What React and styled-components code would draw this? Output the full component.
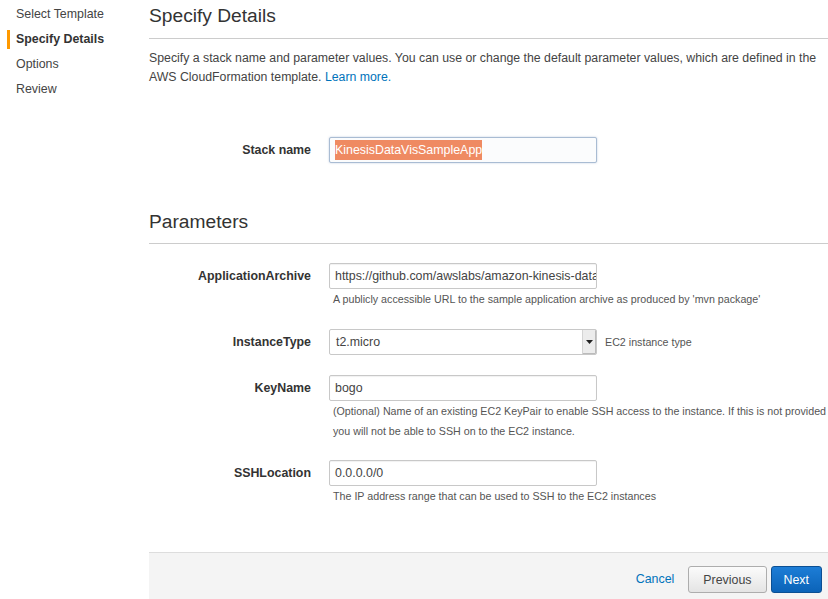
import styled, { createGlobalStyle } from "styled-components";

const GlobalStyle = createGlobalStyle`
  html, body {
    margin: 0;
    padding: 0;
    background: #fff;
  }
  body {
    font-family: "Liberation Sans", Arial, sans-serif;
    color: #444;
    overflow: hidden;
  }
`;

const steps = ["Select Template", "Specify Details", "Options", "Review"];

const params = [
  {
    name: "ApplicationArchive",
    value: "https://github.com/awslabs/amazon-kinesis-data-vis-sample-app/releases/download/v1.1.2/amazon-kinesis-data-visualization-sample-1.1.2-assembly.zip",
    help: "A publicly accessible URL to the sample application archive as produced by 'mvn package'",
    gap: "19px",
  },
  {
    name: "InstanceType",
    value: "t2.micro",
    select: true,
    side: "EC2 instance type",
  },
  {
    name: "KeyName",
    value: "bogo",
    help: "(Optional) Name of an existing EC2 KeyPair to enable SSH access to the instance. If this is not provided you will not be able to SSH on to the EC2 instance.",
  },
  {
    name: "SSHLocation",
    value: "0.0.0.0/0",
    help: "The IP address range that can be used to SSH to the EC2 instances",
    gap: "19px",
  },
];

const App = () => {
  return (
    <Page>
      <GlobalStyle />
      <Sidebar>
        {steps.map((s, i) => (
          <Step key={s} $active={i === 1}>
            {s}
          </Step>
        ))}
      </Sidebar>
      <Content>
        <Heading>Specify Details</Heading>
        <Intro>
          Specify a stack name and parameter values. You can use or change the
          default parameter values, which are defined in the AWS CloudFormation
          template. <Link>Learn more.</Link>
        </Intro>

        <Row $top="50px">
          <Label>Stack name</Label>
          <Field>
            <FakeInput $focused>
              <Selected>KinesisDataVisSampleApp</Selected>
            </FakeInput>
          </Field>
        </Row>

        <Heading $top="43px" $bottom="9px">Parameters</Heading>

        {params.map((p) => (
          <Row key={p.name} $top={p.gap || "20px"}>
            <Label>{p.name}</Label>
            <Field>
              <InputLine>
                {p.select ? (
                  <SelectBox>
                    <SelectValue>{p.value}</SelectValue>
                    <Caret>
                      <svg width="7" height="4" viewBox="0 0 7 4">
                        <path d="M0 0h7L3.5 4z" fill="#222" />
                      </svg>
                    </Caret>
                  </SelectBox>
                ) : (
                  <FakeInput>{p.value}</FakeInput>
                )}
                {p.side && <SideHelp>{p.side}</SideHelp>}
              </InputLine>
              {p.help && <Help>{p.help}</Help>}
            </Field>
          </Row>
        ))}

        <Footer>
          <CancelLink>Cancel</CancelLink>
          <Button>Previous</Button>
          <Button $primary>Next</Button>
        </Footer>
      </Content>
    </Page>
  );
};

const Page = styled.div`
  display: flex;
  width: 828px;
  height: 599px;
`;

const Sidebar = styled.nav`
  width: 149px;
  flex-shrink: 0;
  padding-top: 5px;
  display: flex;
  flex-direction: column;
  gap: 6px;
`;

const Step = styled.div`
  height: 19px;
  line-height: 19px;
  font-size: 12.4px;
  margin-left: 7px;
  padding-left: 6px;
  border-left: 3px solid ${(p) => (p.$active ? "#f90" : "transparent")};
  font-weight: ${(p) => (p.$active ? "bold" : "normal")};
  color: ${(p) => (p.$active ? "#333" : "#444")};
`;

const Content = styled.main`
  flex: 1;
  display: flex;
  flex-direction: column;
  min-width: 0;
`;

const Heading = styled.h2`
  margin: ${(p) => p.$top || "0"} 0 0;
  padding: 4px 0 ${(p) => p.$bottom || "10px"};
  font-size: 19.2px;
  line-height: 24px;
  font-weight: normal;
  color: #333;
  border-bottom: 1px solid #ccc;
`;

const Intro = styled.p`
  margin: 10px 0 0;
  font-size: 12.3px;
  line-height: 19px;
  color: #444;
  padding-right: 10px;
`;

const Link = styled.a`
  color: #0073bb;
  cursor: pointer;
`;

const Row = styled.div`
  display: flex;
  align-items: flex-start;
  margin-top: ${(p) => p.$top};
`;

const Label = styled.div`
  width: 162px;
  flex-shrink: 0;
  text-align: right;
  font-size: 12.4px;
  font-weight: bold;
  color: #333;
  line-height: 26px;
  padding-right: 18px;
`;

const Field = styled.div`
  flex: 1;
  min-width: 0;
`;

const InputLine = styled.div`
  display: flex;
  align-items: center;
`;

const FakeInput = styled.div`
  width: 268px;
  height: 26px;
  box-sizing: border-box;
  padding: 0 5px;
  border: 1px solid ${(p) => (p.$focused ? "#a9bcd3" : "#c8c8c8")};
  border-radius: 2px;
  background: ${(p) => (p.$focused ? "#fbfcfd" : "#fff")};
  box-shadow: ${(p) =>
    p.$focused ? "0 0 2px rgba(120,150,190,0.5)" : "inset 0 1px 1px rgba(0,0,0,0.06)"};
  font-size: 12.4px;
  line-height: 24px;
  color: #444;
  white-space: nowrap;
  overflow: hidden;
`;

const Selected = styled.span`
  background: #ef8a62;
  color: #fff;
  padding: 3px 0;
`;

const SelectBox = styled.div`
  width: 268px;
  height: 26px;
  box-sizing: border-box;
  display: flex;
  border: 1px solid #c8c8c8;
  border-radius: 2px;
  background: #fff;
  overflow: hidden;
`;

const SelectValue = styled.div`
  flex: 1;
  padding: 0 6px;
  font-size: 12.4px;
  line-height: 24px;
  color: #444;
`;

const Caret = styled.div`
  width: 13px;
  display: flex;
  align-items: center;
  justify-content: center;
  background: #ececec;
  border-left: 1px solid #d4d4d4;
  box-shadow: inset -1px -1px 0 #bbb;
`;

const SideHelp = styled.span`
  margin-left: 8px;
  font-size: 10.7px;
  color: #555;
`;

const Help = styled.div`
  padding-left: 4px;
  font-size: 10.7px;
  line-height: 20px;
  color: #555;
`;

const Footer = styled.footer`
  margin-top: 46px;
  flex: 1;
  display: flex;
  justify-content: flex-end;
  align-items: flex-start;
  gap: 4px;
  padding: 13px 6px 0 0;
  background: #f4f4f4;
  border-top: 1px solid #ddd;
`;

const CancelLink = styled.a`
  font-size: 12.4px;
  line-height: 26px;
  color: #0073bb;
  margin-right: 10px;
  cursor: pointer;
`;

const Button = styled.button`
  height: 27px;
  padding: 0 ${(p) => (p.$primary ? "12px" : "14px")};
  font-family: "Liberation Sans", Arial, sans-serif;
  font-size: 12.4px;
  border-radius: 3px;
  border: 1px solid ${(p) => (p.$primary ? "#0b4f93" : "#adadad")};
  background: ${(p) =>
    p.$primary
      ? "linear-gradient(#1d7dd6, #0b63b8)"
      : "linear-gradient(#fbfbfb, #e4e4e4)"};
  color: ${(p) => (p.$primary ? "#fff" : "#444")};
  cursor: pointer;
`;

export default App;
